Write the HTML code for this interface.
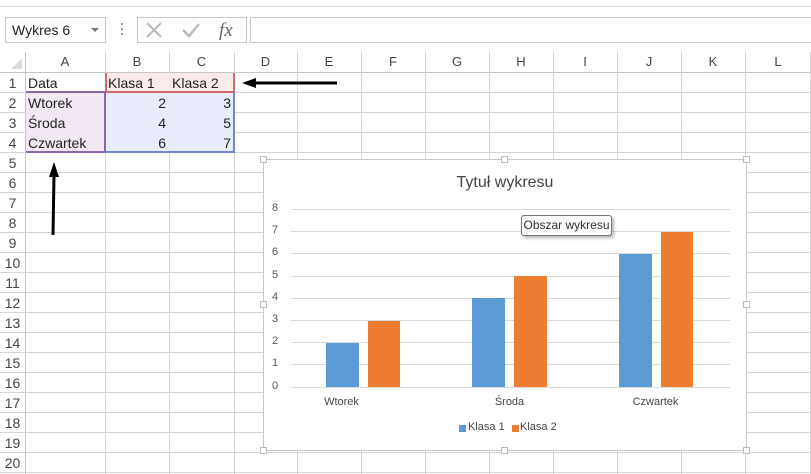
<!DOCTYPE html>
<html><head><meta charset="utf-8"><style>
*{margin:0;padding:0;box-sizing:border-box}
body{width:811px;height:474px;overflow:hidden;background:#fff;font-family:"Liberation Sans","DejaVu Sans",sans-serif;position:relative;color:#222}
.a{position:absolute}
.vl{position:absolute;width:1px;background:#d4d4d4;top:52px;height:422px}
.hl{position:absolute;height:1px;background:#d4d4d4;left:0;width:811px}
.ch{position:absolute;top:52px;height:20px;line-height:20px;text-align:center;font-size:13px;color:#444}
.rh{position:absolute;left:0;width:25px;height:20px;line-height:20px;text-align:center;font-size:14px;color:#444}
.c{position:absolute;height:20px;line-height:20px;font-size:14px;color:#222}
.yl{position:absolute;left:8px;font-size:11px;color:#555;width:10px}
.g{position:absolute;left:27px;width:439px;height:1px;background:#d9d9d9}
.bar{position:absolute}
.h{position:absolute;width:7px;height:7px;border:1px solid #bbb;background:#fff}
</style></head><body>
<div class="hl" style="top:6px;background:#dcdcdc"></div>
<div class="a" style="left:5px;top:17px;width:101px;height:26px;border:1px solid #c6c6c6;font-size:14px;line-height:24px;padding-left:6px;color:#222">Wykres 6<span class="a" style="right:6px;top:10px;width:0;height:0;border-left:4px solid transparent;border-right:4px solid transparent;border-top:4px solid #777"></span></div>
<div class="a" style="left:121px;top:23px;width:2px;height:2px;background:#999"></div>
<div class="a" style="left:121px;top:28px;width:2px;height:2px;background:#999"></div>
<div class="a" style="left:121px;top:33px;width:2px;height:2px;background:#999"></div>
<div class="a" style="left:137px;top:17px;width:110px;height:26px;border:1px solid #c6c6c6"></div>
<svg class="a" style="left:137px;top:17px" width="110" height="26"><path d="M10 6 L24 20 M24 6 L10 20" stroke="#bbb" stroke-width="2"/><path d="M46 13 L52 19 L62 7" stroke="#bbb" stroke-width="2.5" fill="none"/><text x="82" y="19" font-family="Liberation Serif,serif" font-style="italic" font-size="19" fill="#666">fx</text></svg>
<div class="a" style="left:250px;top:17px;width:561px;height:26px;border:1px solid #c6c6c6;border-right:none"></div>
<div class="hl" style="top:72px;background:#c6c6c6"></div>
<div class="a" style="left:0;top:52px;width:25px;height:20px"><div class="a" style="right:3px;bottom:3px;width:0;height:0;border-left:11px solid transparent;border-bottom:11px solid #dcdcdc"></div></div>
<div class="vl" style="left:25px;background:#c6c6c6"></div>
<div class="vl" style="left:105px"></div><div class="vl" style="left:169px"></div><div class="vl" style="left:234px"></div><div class="vl" style="left:297px"></div><div class="vl" style="left:361px"></div><div class="vl" style="left:425px"></div><div class="vl" style="left:489px"></div><div class="vl" style="left:553px"></div><div class="vl" style="left:617px"></div><div class="vl" style="left:681px"></div><div class="vl" style="left:745px"></div><div class="vl" style="left:810px"></div>
<div class="ch" style="left:25px;width:80px">A</div><div class="ch" style="left:105px;width:64px">B</div><div class="ch" style="left:169px;width:65px">C</div><div class="ch" style="left:234px;width:63px">D</div><div class="ch" style="left:297px;width:64px">E</div><div class="ch" style="left:361px;width:64px">F</div><div class="ch" style="left:425px;width:64px">G</div><div class="ch" style="left:489px;width:64px">H</div><div class="ch" style="left:553px;width:64px">I</div><div class="ch" style="left:617px;width:64px">J</div><div class="ch" style="left:681px;width:64px">K</div><div class="ch" style="left:745px;width:66px">L</div>
<div class="hl" style="top:92px"></div><div class="hl" style="top:112px"></div><div class="hl" style="top:132px"></div><div class="hl" style="top:152px"></div><div class="hl" style="top:172px"></div><div class="hl" style="top:192px"></div><div class="hl" style="top:212px"></div><div class="hl" style="top:232px"></div><div class="hl" style="top:252px"></div><div class="hl" style="top:272px"></div><div class="hl" style="top:292px"></div><div class="hl" style="top:312px"></div><div class="hl" style="top:332px"></div><div class="hl" style="top:352px"></div><div class="hl" style="top:372px"></div><div class="hl" style="top:392px"></div><div class="hl" style="top:412px"></div><div class="hl" style="top:432px"></div><div class="hl" style="top:452px"></div><div class="hl" style="top:472px"></div>
<div class="rh" style="top:73px">1</div><div class="rh" style="top:93px">2</div><div class="rh" style="top:113px">3</div><div class="rh" style="top:133px">4</div><div class="rh" style="top:153px">5</div><div class="rh" style="top:173px">6</div><div class="rh" style="top:193px">7</div><div class="rh" style="top:213px">8</div><div class="rh" style="top:233px">9</div><div class="rh" style="top:253px">10</div><div class="rh" style="top:273px">11</div><div class="rh" style="top:293px">12</div><div class="rh" style="top:313px">13</div><div class="rh" style="top:333px">14</div><div class="rh" style="top:353px">15</div><div class="rh" style="top:373px">16</div><div class="rh" style="top:393px">17</div><div class="rh" style="top:413px">18</div><div class="rh" style="top:433px">19</div><div class="rh" style="top:453px">20</div>
<div class="a" style="left:106px;top:73px;width:128px;height:19px;background:#fbe9e9;opacity:.9"></div>
<div class="a" style="left:26px;top:93px;width:79px;height:59px;background:#f1e8f3"></div>
<div class="a" style="left:106px;top:93px;width:128px;height:59px;background:#e9ecfa"></div>
<div class="a" style="left:105px;top:73px;width:2px;height:19px;background:#d06a6a"></div>
<div class="a" style="left:233px;top:73px;width:2px;height:19px;background:#d06a6a"></div>
<div class="a" style="left:105px;top:91px;width:130px;height:2px;background:#d06a6a"></div>
<div class="a" style="left:26px;top:91px;width:80px;height:2px;background:#8a68a6"></div>
<div class="a" style="left:26px;top:151px;width:80px;height:2px;background:#8a68a6"></div>
<div class="a" style="left:104px;top:91px;width:2px;height:62px;background:#8a68a6"></div>
<div class="a" style="left:105px;top:151px;width:130px;height:2px;background:#6f88cf"></div>
<div class="a" style="left:233px;top:92px;width:2px;height:61px;background:#6f88cf"></div>
<div class="c" style="left:28px;top:73px">Data</div><div class="c" style="left:108px;top:73px">Klasa 1</div><div class="c" style="left:172px;top:73px">Klasa 2</div>
<div class="c" style="left:28px;top:93px">Wtorek</div><div class="c" style="left:28px;top:113px">Środa</div><div class="c" style="left:28px;top:133px">Czwartek</div>
<div class="c" style="left:105px;top:93px;width:61px;text-align:right">2</div><div class="c" style="left:169px;top:93px;width:62px;text-align:right">3</div>
<div class="c" style="left:105px;top:113px;width:61px;text-align:right">4</div><div class="c" style="left:169px;top:113px;width:62px;text-align:right">5</div>
<div class="c" style="left:105px;top:133px;width:61px;text-align:right">6</div><div class="c" style="left:169px;top:133px;width:62px;text-align:right">7</div>
<svg class="a" style="left:0;top:0" width="811" height="474"><path d="M254 83 L337 83" stroke="#000" stroke-width="3"/><path d="M242 83 L256 78 L256 88 Z" fill="#000"/><path d="M53 235 L54 175" stroke="#000" stroke-width="3"/><path d="M54 162 L49 177 L59 177 Z" fill="#000"/></svg>
<div class="a" style="left:263px;top:159px;width:484px;height:292px;background:#fff;border:1px solid #c8c8c8">
 <div class="a" style="left:0;top:14px;width:482px;text-align:center;font-size:16px;color:#444">Tytuł wykresu</div>
 <div class="g" style="top:49px"></div><div class="g" style="top:71px"></div><div class="g" style="top:93px"></div><div class="g" style="top:116px"></div><div class="g" style="top:138px"></div><div class="g" style="top:160px"></div><div class="g" style="top:182px"></div><div class="g" style="top:204px"></div><div class="g" style="top:227px"></div>
 <div class="yl" style="top:42px">8</div><div class="yl" style="top:64px">7</div><div class="yl" style="top:86px">6</div><div class="yl" style="top:109px">5</div><div class="yl" style="top:131px">4</div><div class="yl" style="top:153px">3</div><div class="yl" style="top:175px">2</div><div class="yl" style="top:197px">1</div><div class="yl" style="top:220px">0</div>
 <div class="bar" style="left:62px;top:183px;width:33px;height:44px;background:#5b9bd5"></div>
 <div class="bar" style="left:104px;top:161px;width:32px;height:66px;background:#ed7d31"></div>
 <div class="bar" style="left:208px;top:138px;width:33px;height:89px;background:#5b9bd5"></div>
 <div class="bar" style="left:250px;top:116px;width:33px;height:111px;background:#ed7d31"></div>
 <div class="bar" style="left:355px;top:94px;width:33px;height:133px;background:#5b9bd5"></div>
 <div class="bar" style="left:397px;top:72px;width:32px;height:155px;background:#ed7d31"></div>
 <div class="a" style="left:45px;top:236px;width:65px;text-align:center;font-size:11px;color:#444">Wtorek</div>
 <div class="a" style="left:213px;top:236px;width:65px;text-align:center;font-size:11px;color:#444">Środa</div>
 <div class="a" style="left:359px;top:236px;width:65px;text-align:center;font-size:11px;color:#444">Czwartek</div>
 <div class="a" style="left:195px;top:265px;width:7px;height:7px;background:#5b9bd5"></div><div class="a" style="left:204px;top:261px;font-size:11px;color:#444">Klasa 1</div>
 <div class="a" style="left:248px;top:265px;width:7px;height:7px;background:#ed7d31"></div><div class="a" style="left:256px;top:261px;font-size:11px;color:#444">Klasa 2</div>
</div>
<div class="h" style="left:260px;top:156px"></div><div class="h" style="left:501px;top:156px"></div><div class="h" style="left:743px;top:156px"></div>
<div class="h" style="left:260px;top:301px"></div><div class="h" style="left:743px;top:301px"></div>
<div class="h" style="left:260px;top:447px"></div><div class="h" style="left:501px;top:447px"></div><div class="h" style="left:743px;top:447px"></div>
<div class="a" style="left:521px;top:215px;width:91px;height:21px;border:1px solid #777;border-radius:3px;background:#fafafa;box-shadow:2px 2px 3px rgba(0,0,0,.3);font-size:12px;line-height:19px;text-align:center;color:#333">Obszar wykresu</div>
</body></html>
